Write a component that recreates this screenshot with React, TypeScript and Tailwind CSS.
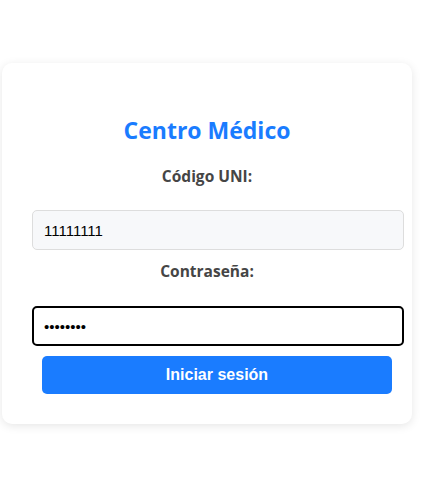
export default function App() {
  return (
    <div className="min-h-[489px] w-[432px] bg-white pt-[63px] pl-[2px]">
      <div className="w-[410px] rounded-[10px] bg-white px-[30px] pt-[52px] pb-[30px] shadow-[0_2px_10px_rgba(0,0,0,0.1)]">
        <h2 className="text-center font-['Open_Sans',sans-serif] text-[23px] leading-[30px] font-bold text-[#1a7cff]">
          Centro Médico
        </h2>
        <label className="mt-[21px] block text-center font-['Open_Sans',sans-serif] text-[15.5px] leading-[20px] font-bold text-[#454545]">
          Código UNI:
        </label>
        <input
          className="mt-[24px] block h-[40px] w-[372px] rounded-[5px] border border-[#dddddd] bg-[#f7f8fa] px-[11px] font-['Liberation_Sans',Arial,sans-serif] text-[15px] text-black outline-none"
          defaultValue="11111111"
        />
        <label className="mt-[11px] block text-center font-['Open_Sans',sans-serif] text-[15.5px] leading-[20px] font-bold text-[#454545]">
          Contraseña:
        </label>
        <input
          type="password"
          className="mt-[25px] block h-[40px] w-[372px] rounded-[5px] border-2 border-black bg-white px-[10px] font-['Liberation_Sans',Arial,sans-serif] text-[15px] text-black caret-black outline-none"
          defaultValue="12345678"
          autoFocus
        />
        <button className="mt-[10px] ml-[10px] block h-[38px] w-[350px] rounded-[5px] bg-[#1a7cff] font-['Liberation_Sans',Arial,sans-serif] text-[16px] font-bold text-white">
          Iniciar sesión
        </button>
      </div>
    </div>
  );
}
